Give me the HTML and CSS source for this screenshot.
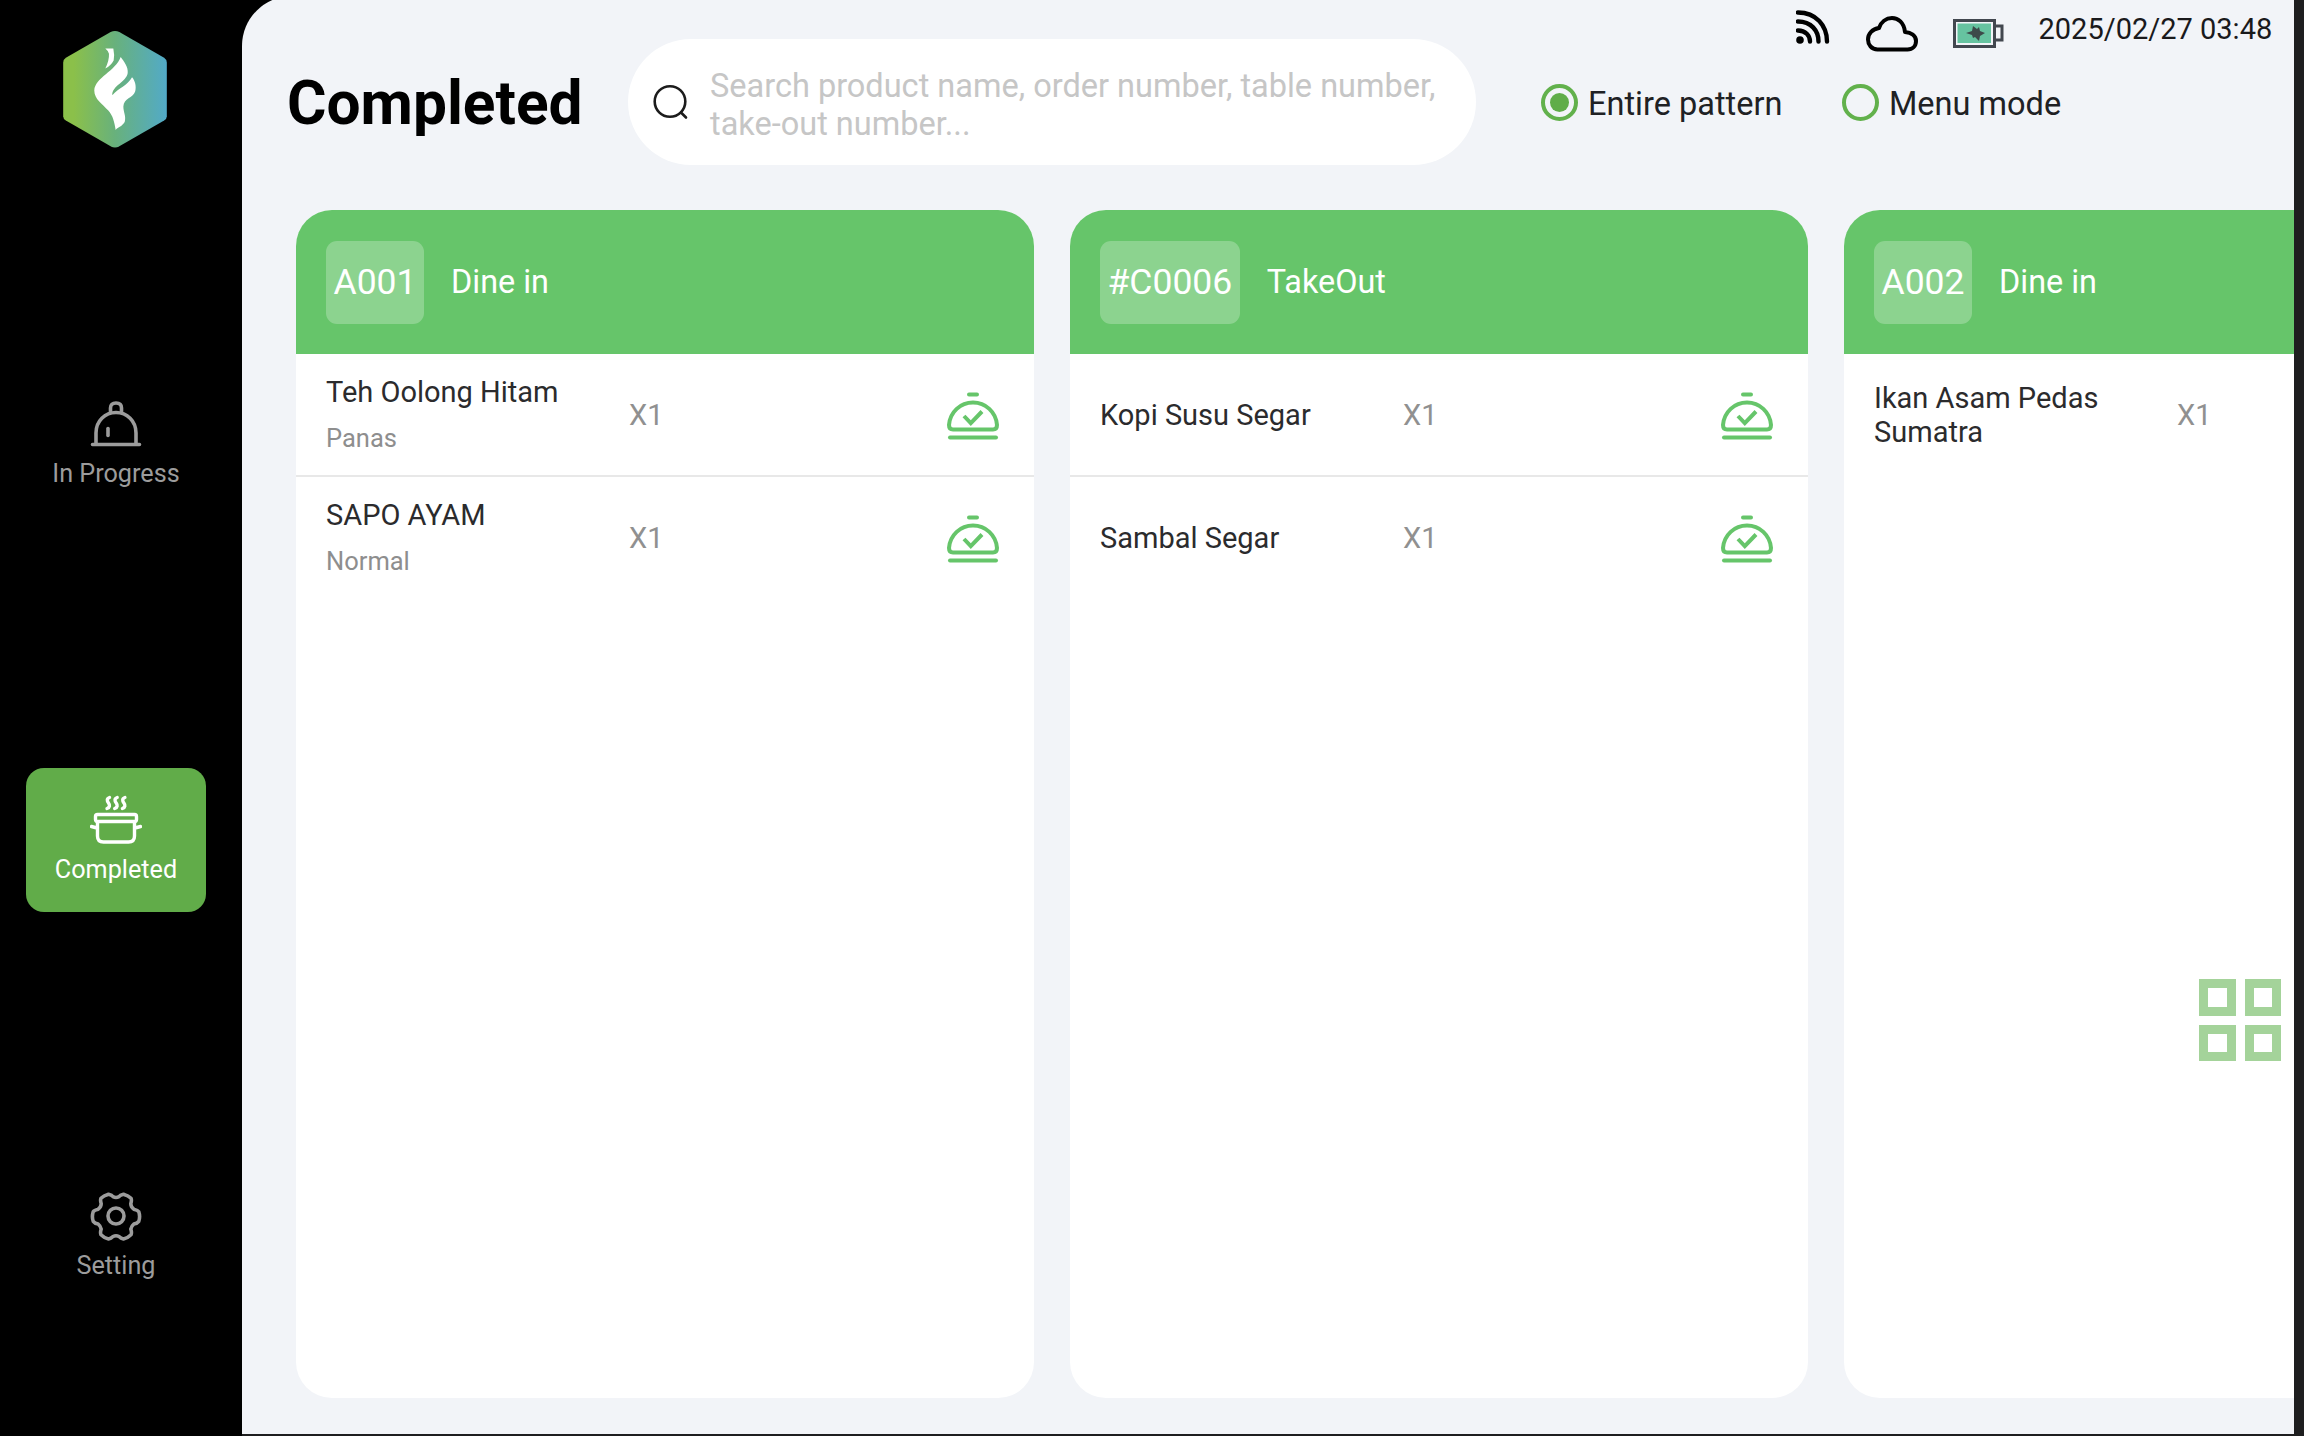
FILE: index.html
```html
<!DOCTYPE html>
<html lang="en">
    <head>
        <meta charset="utf-8">
        <meta name="viewport" content="width=device-width, initial-scale=1">
        <title>Kitchen Display - Completed</title>
        <link rel="stylesheet" href="styles.css">
    </head>
    <body>
        <!-- shared icons -->
        <svg class="defs">
            <symbol id="served" viewBox="0 0 52 50">
                <g fill="none" stroke="#66c56a" stroke-width="4" stroke-linecap="round" stroke-linejoin="round">
                    <path d="M22 3.5h8" stroke-width="4"/>
                    <path d="M6 38.5h40q4 0 4-4.5C49 21 38.500 11.500 26 11.500S3 21 2 34q0 4.500 4 4.500z"/>
                    <path d="M17 25l6.800 7.200L35 20.500" stroke-linecap="butt" stroke-linejoin="miter"/>
                    <path d="M3 46.500h46"/>
                </g>
            </symbol>
        </svg>
        <aside class="sidebar">
            <svg class="logo" viewBox="190 92 310 350">
                <defs>
                    <linearGradient id="brand">
                        <stop offset="0.1" stop-color="#8bc04a"/>
                        <stop offset="0.5" stop-color="#68b17c"/>
                        <stop offset="1" stop-color="#52aac8"/>
                    </linearGradient>
                </defs>
                <path fill="url(#brand)" d="M332 95q13-6 26 0l134 77q8 5 8 15v160q0 8-8 13l-134 77q-13 7-26 0l-134-77q-8-5-8-13V187q0-10 8-15z"/>
                <path fill="#fff" d="M316 144h24q4 18 1 36-8 15-25 24 12-24 11-44-3-10-11-16z"/>
                <path fill="#fff" d="M362 170c10 13 23 30 21 48-4 27-47 38-46 66 18-22 46-29 59-54 9 10 14 28 9 44-6 18-34 20-35 44 0 18 9 28 4 46-8 14-22 16-27 24-4-24-8-42-22-58-18-20-42-34-42-60 2-38 64-58 79-100z"/>
            </svg>
            <nav class="nav">
                <a class="nav-item">
                    <svg class="nav-icon" viewBox="0 0 52 50" fill="none" stroke="currentColor" stroke-width="3.6" stroke-linecap="round" stroke-linejoin="round">
                        <path d="M2.500 45.500h47M6 45V34C6 22 15 13.500 26 13.500S46 22 46 34v11"/>
                        <path d="M20.500 13.500V9q0-5 5.500-5t5.500 5v4.500"/>
                        <path d="M18 29.500v7"/>
                    </svg>
                    <span>In Progress</span>
                </a>
                <a class="nav-item active">
                    <svg class="nav-icon" viewBox="0 0 52 50" fill="none" stroke="currentColor" stroke-width="3.4" stroke-linecap="round" stroke-linejoin="round">
                        <path d="M7.500 19.500h37q2 0 2 2v3q0 2-2 2h-37q-2 0-2-2v-3q0-2 2-2z"/>
                        <path d="M7.500 27v14q0 6 6 6h25q6 0 6-6V27M7 33l-5.500-1.500M45 33l5.500-1.500"/>
                        <path d="M19.500 2.500c-3 1-2.500 3.500-1 5.500s1.500 4.500-1.500 5.500M27.200 2.500c-3 1-2.500 3.500-1 5.500s1.500 4.500-1.500 5.500M34.900 2.500c-3 1-2.500 3.500-1 5.500s1.500 4.500-1.500 5.500"/>
                    </svg>
                    <span>Completed</span>
                </a>
                <a class="nav-item">
                    <svg class="nav-icon" viewBox="0 0 52 50" fill="none" stroke="currentColor" stroke-width="3.6" stroke-linejoin="round">
                        <path d="M18.500 3.200q3.500.800 4.500 2.500 3 1.500 6 0 1-1.700 4.500-2.500 5 1.500 7.500 4 .900 2-.2 5.500 0 3 3 5.500 4 1 5 2.500 1.600 4.800 0 9.600-1.500 2-5 2.800-2.500 2-3 5 1.200 4 .2 5.600-3.500 3.500-7.500 4.300-2.500-.5-4.500-2.500-3-1.500-6 0-2 2-4.500 2.500-4-.8-7.500-4.300-1-1.600.2-5.600-.5-3-3-5-3.500-.8-5-2.800-1.600-4.800 0-9.600 1-1.500 5-2.500 3-2.500 3-5.500-1.100-3.500-.2-5.500 2.500-2.500 7.500-4z"/>
                        <circle cx="26" cy="25" r="8"/>
                    </svg>
                    <span>Setting</span>
                </a>
            </nav>
        </aside>
        <main class="main">
            <header class="header">
                <h1 class="title">Completed</h1>
                <div class="search">
                    <svg class="search-icon" viewBox="0 0 36 36" fill="none" stroke="#1c1c1c" stroke-width="2.6" stroke-linecap="round">
                        <circle cx="17" cy="17.500" r="15.300"/>
                        <path d="M28 28.500l5 5"/>
                    </svg>
                    <div class="search-hint">Search product name, order number, table number, take-out number...</div>
                </div>
                <div class="tools">
                    <div class="status">
                        <svg class="wifi" viewBox="0 0 34 34" fill="none" stroke="#000" stroke-width="4.4" stroke-linecap="round">
                            <circle cx="4" cy="30" r="3.800" fill="#000" stroke="none"/>
                            <path d="M2 20.500c7.500 0 12 5 12 11M2 11.500c13 0 20.500 9 20.500 20M2 2.500c18 0 29 13 29 29"/>
                        </svg>
                        <svg class="cloud" viewBox="0 0 52 36" fill="none" stroke="#000" stroke-width="4" stroke-linejoin="round">
                            <path d="M11.500 33.500C5.500 33.500 2 28.500 2 23.500c0-6 4.500-10.500 11-11.500C15 6 20 2 26 2s12 4.500 13 14c6 .500 11 3.500 11 9 0 5-3.500 8.500-8.500 8.500z"/>
                        </svg>
                        <svg class="battery" viewBox="0 0 52 30">
                            <path fill="none" stroke="#42474f" stroke-width="3" d="M1.500 1.500h40v26h-40zM43 7h6v14h-6"/>
                            <path fill="#66c3a0" d="M4.500 4.500h33.500v19.500H4.500z"/>
                            <path fill="#3d4a4a" d="M20 7l4 3 2-2 1 4 5 2-5 3-1 5-4-4-2 1-1-3-6-2 6-2z"/>
                        </svg>
                        <span class="clock">2025/02/27 03:48</span>
                    </div>
                    <div class="modes">
                        <label class="mode"><span class="radio checked"></span><span class="mode-text">Entire pattern</span></label>
                        <label class="mode"><span class="radio"></span><span class="mode-text">Menu mode</span></label>
                    </div>
                </div>
            </header>
            <section class="orders">
                <article class="order">
                    <div class="order-head">
                        <span class="order-no">A001</span>
                        <span class="order-type">Dine in</span>
                    </div>
                    <div class="item">
                        <div class="item-name">Teh Oolong Hitam<div class="item-note">Panas</div></div>
                        <span class="item-count">X1</span>
                        <svg class="served"><use href="#served"/></svg>
                    </div>
                    <div class="item">
                        <div class="item-name">SAPO AYAM<div class="item-note">Normal</div></div>
                        <span class="item-count">X1</span>
                        <svg class="served"><use href="#served"/></svg>
                    </div>
                </article>
                <article class="order">
                    <div class="order-head">
                        <span class="order-no">#C0006</span>
                        <span class="order-type">TakeOut</span>
                    </div>
                    <div class="item">
                        <div class="item-name">Kopi Susu Segar</div>
                        <span class="item-count">X1</span>
                        <svg class="served"><use href="#served"/></svg>
                    </div>
                    <div class="item">
                        <div class="item-name">Sambal Segar</div>
                        <span class="item-count">X1</span>
                        <svg class="served"><use href="#served"/></svg>
                    </div>
                </article>
                <article class="order">
                    <div class="order-head">
                        <span class="order-no">A002</span>
                        <span class="order-type">Dine in</span>
                    </div>
                    <div class="item">
                        <div class="item-name">Ikan Asam Pedas Sumatra</div>
                        <span class="item-count">X1</span>
                    </div>
                </article>
            </section>
            <!-- floating layout switch -->
            <div class="layout-switch"><i></i><i></i><i></i><i></i></div>
        </main>
    </body>
</html>
```

FILE: styles.css
```css
*{
    box-sizing: border-box;
}
html, body{
    height: 100%;
}
body{
    margin: 0;
    display: flex;
    overflow: hidden;
    background-color: #000;
    font-family: Roboto, sans-serif;
}
.defs{
    position: absolute;
    width: 0;
    height: 0;
}

/* sidebar */
.sidebar{
    flex: none;
    width: 242px;
    padding: 31px 36px 0 26px;
}
.logo{
    display: block;
    width: 104px;
    height: 117px;
    margin-left: 37px;
}
.nav{
    display: flex;
    flex-direction: column;
    gap: 252px;
    margin-top: 224px;
}
.nav-item{
    display: flex;
    flex-direction: column;
    align-items: center;
    height: 144px;
    padding-top: 27px;
    border-radius: 18px;
    color: #9c9c9c;
    font-size: 25.2px;
    line-height: 32px;
}
.nav-item.active{
    background-color: #61ac49;
    color: #fff;
}
.nav-icon{
    width: 52px;
    height: 50px;
    margin-bottom: 9px;
}

/* page */
.main{
    position: relative;
    flex: 1;
    margin-top: -4px;
    padding-top: 4px;
    border-right: 10px solid #1e1e1f;
    border-bottom: 2px solid #1e1e1f;
    border-top-left-radius: 50px;
    background-color: #f2f4f8;
    overflow: hidden;
}
.header{
    display: flex;
    height: 210px;
    padding-left: 45px;
}
.title{
    width: 341px;
    margin: 69px 0 0;
    font-size: 60.4px;
    line-height: 70px;
    font-weight: bold;
    color: #000;
}
.search{
    display: flex;
    align-items: center;
    width: 848px;
    height: 126px;
    margin-top: 39px;
    padding-left: 25px;
    border-radius: 63px;
    background-color: #fff;
}
.search-icon{
    flex: none;
    width: 36px;
    height: 36px;
    margin-right: 21px;
}
.search-hint{
    width: 740px;
    padding-top: 6px;
    color: #c6c6c6;
    font-size: 32.5px;
    line-height: 38px;
}
.tools{
    flex: 1;
    padding-left: 65px;
}
.status{
    display: flex;
    height: 60px;
    padding: 10px 22px 0 0;
    justify-content: flex-end;
}
.wifi{
    width: 34px;
    height: 34px;
    margin-right: 36px;
}
.cloud{
    width: 52px;
    height: 36px;
    margin: 6px 35px 0 0;
}
.battery{
    width: 52px;
    height: 30px;
    margin: 9px 34px 0 0;
}
.clock{
    width: 233.5px;
    color: #1a1a1c;
    font-size: 29px;
    line-height: 38px;
    white-space: nowrap;
}
.modes{
    display: flex;
    margin-top: 23px;
}
.mode{
    display: flex;
    align-items: center;
    gap: 10px;
    width: 301px;
    color: #202124;
    font-size: 32.5px;
    line-height: 38px;
    white-space: nowrap;
}
.mode-text{
    padding-top: 2px;
    margin-bottom: -2px;
}
.radio{
    width: 37px;
    height: 37px;
    border: 4px solid #62b14c;
    border-radius: 50%;
}
.radio.checked{
    padding: 5px;
    background: #60ad49 content-box;
}

/* order cards */
.orders{
    display: flex;
    gap: 36px;
    padding-left: 54px;
}
.order{
    flex: none;
    width: 738px;
    height: 1188px;
    border-radius: 36px;
    background-color: #fff;
    overflow: hidden;
}
.order-head{
    display: flex;
    align-items: center;
    height: 144px;
    padding-left: 30px;
    background-color: #66c56a;
    color: #fff;
}
.order-no{
    height: 83px;
    padding: 0 7.5px;
    margin-right: 27px;
    border-radius: 11px;
    background-color: rgba(255, 255, 255, 0.25);
    font-size: 35.5px;
    line-height: 83px;
}
.order-type{
    font-size: 32.4px;
}
.item{
    display: flex;
    align-items: center;
    height: 123px;
    padding: 0 35px 0 30px;
    border-bottom: 2px solid #e8e8e8;
}
.item:last-child{
    border-color: transparent;
}
.item-name{
    width: 240px;
    padding-top: 1px;
    margin-right: 63px;
    color: #2b2b2d;
    font-size: 29px;
    line-height: 34px;
}
.item-note{
    margin-top: 12px;
    color: #8e8e8e;
    font-size: 25.5px;
}
.item-count{
    color: #909090;
    font-size: 29px;
}
.served{
    width: 52px;
    height: 50px;
    margin-left: auto;
    margin-top: 2px;
}

.layout-switch{
    position: absolute;
    right: 13px;
    top: 983px;
    display: grid;
    grid-template-columns: 36.5px 36.5px;
    gap: 9px;
}
.layout-switch i{
    height: 36.5px;
    border: 9px solid #a4d39a;
}
```
